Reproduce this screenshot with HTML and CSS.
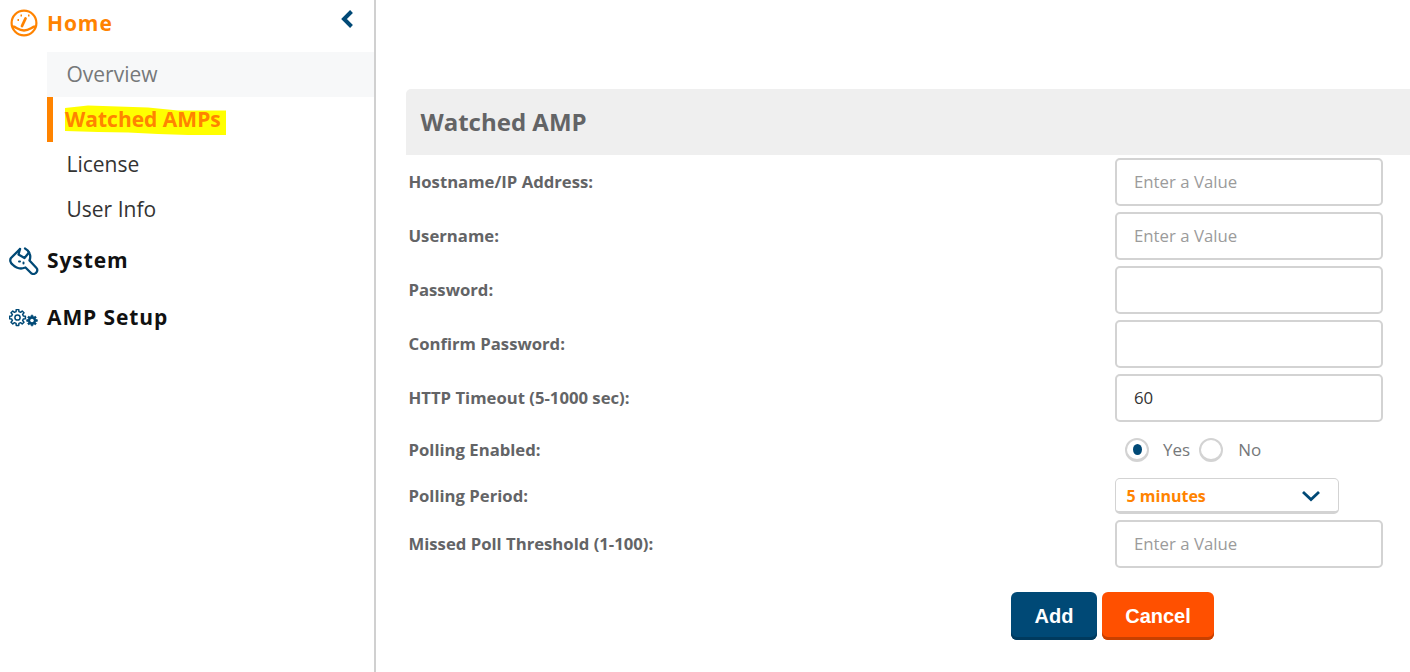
FILE: index.html
```html
<!DOCTYPE html>
<html lang="en">
<head>
  <meta charset="UTF-8">
  <title>Watched AMP</title>
  <link rel="stylesheet" href="styles.css">
</head>
<body>
  <!-- sidebar -->
  <aside class="sidebar">
    <div class="nav-head nav-home">
      <svg class="nav-icon nav-icon-home" width="28" height="28" viewBox="0 0 28 28" fill="none" stroke="#ff8300" stroke-width="2.200">
        <circle cx="14" cy="14" r="12.400"/>
        <path d="M3 17.500c3.500 .5 5.500 4 11 4s7.500-3.500 11-4" stroke-width="2.400"/>
        <path d="M12 17l3.500-7.500" stroke-width="2.800" stroke-linecap="round"/>
        <path d="M7.500 11h1.500M10.500 6.500h1.500M18 6.500h1.500" stroke-width="1.800"/>
      </svg>
      <span>Home</span>
      <svg class="collapse" width="14" height="20" viewBox="0 0 14 20" fill="none" stroke="#004976" stroke-width="4">
        <path d="M11.500 2.500L4 10l7.500 7.500"/>
      </svg>
    </div>
    <ul class="subnav">
      <li class="sub-hover">Overview</li>
      <li class="sub-active">
        <svg class="marker" width="170" height="36" viewBox="0 0 170 36"><path fill="#ffff00" d="M7 8L30 5.500 60 6.500 90 7.500 120 10.500 168 10.500 168 35 130 35 100 34 70 32.500 40 32 7 31z"/></svg>
        <span>Watched AMPs</span>
      </li>
      <li>License</li>
      <li>User Info</li>
    </ul>
    <div class="nav-head nav-system">
      <svg class="nav-icon" width="30" height="28" viewBox="0 0 30 28" fill="none" stroke="#004976" stroke-width="2.300" stroke-linejoin="round" stroke-linecap="round">
        <path d="M11 2L2 11C.5 13 1.500 16 3.500 17.500 6 20 9 21.500 12 21.500 13.500 21.500 15 21 16.500 20.500L22.500 26.500C24.500 27.500 27 26.500 28 24.500 28.500 23 28.500 22 27.500 21L20.500 13.500C21.500 11 21.500 8.500 20.500 6.500 19.500 4 18 2.500 16 1.500"/>
        <path d="M11 2L9.500 7.500 15.500 11 20 5.500"/>
        <path d="M10 14.500h1M14.500 15.500v1" stroke-width="2"/>
      </svg>
      <span>System</span>
    </div>
    <div class="nav-head nav-setup">
      <svg class="nav-icon" width="30" height="18" viewBox="0 0 30 18" fill="none" stroke="#004976" stroke-linejoin="round">
        <defs>
          <polygon id="gear" points="5.82,-1.45 7.9,-1.25 7.9,1.25 5.82,1.45 5.14,3.09 6.47,4.7 4.7,6.47 3.09,5.14 1.45,5.82 1.25,7.9 -1.25,7.9 -1.45,5.82 -3.09,5.14 -4.7,6.47 -6.47,4.7 -5.14,3.09 -5.82,1.45 -7.9,1.25 -7.9,-1.25 -5.82,-1.45 -5.14,-3.09 -6.47,-4.7 -4.7,-6.47 -3.09,-5.14 -1.45,-5.82 -1.25,-7.9 1.25,-7.9 1.45,-5.82 3.09,-5.14 4.7,-6.47 6.47,-4.7 5.14,-3.09"/>
        </defs>
        <use href="#gear" x="8.500" y="8.500" stroke-width="1.500"/>
        <circle cx="8.500" cy="8.500" r="2.600" stroke-width="1.500"/>
        <g transform="translate(23 11.500) scale(.68)">
          <use href="#gear" fill="#004976" stroke-width="1"/>
          <circle r="2.600" fill="#fff" stroke="none"/>
        </g>
      </svg>
      <span>AMP Setup</span>
    </div>
  </aside>

  <!-- form -->
  <main class="content">
    <h2 class="panel-title">Watched AMP</h2>
    <form class="form">
      <div class="row">
        <label>Hostname/IP Address:</label>
        <input class="field" type="text" placeholder="Enter a Value">
      </div>
      <div class="row">
        <label>Username:</label>
        <input class="field" type="text" placeholder="Enter a Value">
      </div>
      <div class="row">
        <label>Password:</label>
        <input class="field" type="password">
      </div>
      <div class="row">
        <label>Confirm Password:</label>
        <input class="field" type="password">
      </div>
      <div class="row">
        <label>HTTP Timeout (5-1000 sec):</label>
        <input class="field" type="text" value="60">
      </div>
      <div class="row row-radio">
        <label>Polling Enabled:</label>
        <div class="radios">
          <span class="radio radio-on"></span>
          <span class="radio-label">Yes</span>
          <span class="radio"></span>
          <span class="radio-label">No</span>
        </div>
      </div>
      <div class="row row-select">
        <label>Polling Period:</label>
        <div class="control">
          <div class="select">
            <span>5 minutes</span>
            <svg width="20" height="12" viewBox="0 0 20 12" fill="none" stroke="#004976" stroke-width="2.800"><path d="M2 2l8 7.500L18 2"/></svg>
          </div>
        </div>
      </div>
      <div class="row">
        <label>Missed Poll Threshold (1-100):</label>
        <input class="field" type="text" placeholder="Enter a Value">
      </div>
      <div class="actions">
        <button class="btn btn-add" type="button">Add</button>
        <button class="btn btn-cancel" type="button">Cancel</button>
      </div>
    </form>
  </main>
</body>
</html>
```

FILE: styles.css
```css
* {
  margin: 0;
  padding: 0;
  box-sizing: border-box;
}
html, body {
  height: 672px;
  overflow: hidden;
}
body {
  display: flex;
  font-family: "Open Sans", Arial, sans-serif;
  background: #fff;
  color: #333;
}

/* sidebar */
.sidebar {
  width: 376px;
  height: 672px;
  flex-shrink: 0;
  border-right: 2px solid #d0d0d0;
}
.nav-head {
  display: flex;
  align-items: center;
  font-size: 21px;
  font-weight: 700;
  letter-spacing: 0.9px;
  color: #111;
  position: relative;
  padding-left: 47px;
}
.nav-icon {
  position: absolute;
  left: 9px;
  top: 50%;
  transform: translateY(-50%);
}
.nav-icon-home {
  left: 10px;
}
.nav-home {
  height: 46px;
  color: #ff8300;
}
.collapse {
  position: absolute;
  left: 340px;
  top: 9px;
}
.nav-system,
.nav-setup {
  height: 57px;
  padding-bottom: 2px;
}
.subnav {
  list-style: none;
  margin: 6px 0 0 47px;
}
.subnav li {
  height: 45px;
  display: flex;
  align-items: center;
  padding: 0 0 2px 19.5px;
  font-size: 21px;
  color: #333;
}
.subnav .sub-hover {
  background: #f7f8f9;
  color: #76787a;
}
.subnav .sub-active {
  position: relative;
  border-left: 6px solid #ff8300;
  padding-left: 12px;
  font-weight: 700;
  color: #ff8300;
}
.sub-active span {
  position: relative;
}
.marker {
  position: absolute;
  left: 5px;
  top: 3px;
}

/* main panel */
.content {
  flex: 1;
  padding: 89px 0 0 30px;
}
.panel-title {
  height: 66px;
  display: flex;
  align-items: center;
  padding: 0 0 2px 14.5px;
  background: #efefef;
  border-top-left-radius: 5px;
  font-size: 24px;
  font-weight: 700;
  color: #636466;
}
.form {
  display: flex;
  flex-direction: column;
  gap: 6px;
  padding: 3px 27px 0 2.500px;
}
.row {
  display: flex;
  align-items: center;
  justify-content: space-between;
  height: 48px;
}
.row label {
  font-size: 16.700px;
  font-weight: 700;
  color: #636466;
  padding-bottom: 2px;
}
.field {
  width: 268px;
  height: 48px;
  padding: 0 17px 2px;
  border: 2px solid #d3d3d3;
  border-radius: 5px;
  font-family: inherit;
  font-size: 16.800px;
  color: #333;
  background: #fff;
  outline: none;
}
.field::placeholder {
  color: #9b9b9b;
  opacity: 1;
}

/* radio buttons */
.row-radio {
  height: 44px;
}
.radios {
  width: 268px;
  display: flex;
  align-items: center;
  padding-left: 10px;
}
.radio {
  width: 24px;
  height: 24px;
  border: 2px solid #d3d3d3;
  border-bottom-width: 3px;
  border-radius: 50%;
  display: flex;
  align-items: center;
  justify-content: center;
}
.radio-on::after {
  content: "";
  width: 9px;
  height: 11px;
  border-radius: 50%;
  background: #004976;
}
.radio-label {
  font-size: 17px;
  color: #76787a;
  margin: 0 9px 2px 14px;
}
.radio-label:last-child {
  margin-left: 15px;
}

/* select */
.row-select {
  height: 36px;
}
.control {
  width: 268px;
}
.select {
  width: 224px;
  height: 36px;
  display: flex;
  align-items: center;
  justify-content: space-between;
  padding: 1px 17px 0 10.500px;
  background: #fff;
  border: 1px solid #d3d3d3;
  border-bottom: 3px solid #d3d3d3;
  border-radius: 5px;
  font-size: 16px;
  font-weight: 700;
  color: #ff8300;
}

/* buttons */
.actions {
  display: flex;
  gap: 5px;
  margin: 18px 0 0 602.500px;
}
.btn {
  height: 48px;
  border: none;
  border-radius: 6px;
  font-family: "Liberation Sans", Arial, sans-serif;
  font-size: 20px;
  font-weight: 700;
  color: #fff;
}
.btn-add {
  width: 86px;
  background: #004976;
  box-shadow: inset 0 -3px 0 #003a5e;
}
.btn-cancel {
  width: 112px;
  background: #ff5000;
  box-shadow: inset 0 -3px 0 #c84000;
}
```
